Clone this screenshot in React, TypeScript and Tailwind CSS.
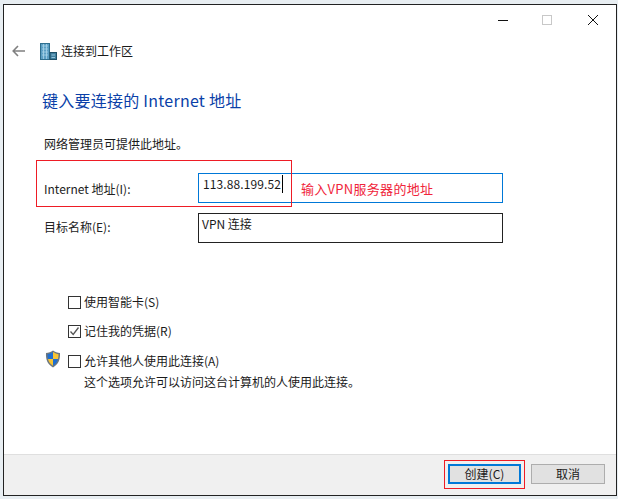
const font = { fontFamily: '"Noto Sans CJK SC", "Noto Sans", sans-serif' };

function Checkbox({ checked }: { checked?: boolean }) {
  return (
    <span className="flex h-[13px] w-[13px] shrink-0 items-center justify-center border border-[#333333] bg-white">
      {checked && (
        <svg width="11" height="11" viewBox="0 0 11 11" fill="none">
          <path d="M1.5 5.5 L4.2 8.5 L9.5 1.5" stroke="#555555" strokeWidth="1.3" />
        </svg>
      )}
    </span>
  );
}

function BuildingIcon() {
  return (
    <svg width="17" height="17" viewBox="0 0 17 17">
      <rect x="0.5" y="0.5" width="9" height="16" fill="#5c9fc4" stroke="#2f6f8f" />
      <path d="M2 3h6M2 6h6M2 9h6M2 12h6M3.5 1v15M6.5 1v15" stroke="#a8d4ea" strokeWidth="0.8" />
      <rect x="10" y="9.5" width="6.5" height="7" fill="#3f7f9f" stroke="#1f5068" />
      <path d="M11.5 12h3.5M11.5 14.5h3.5" stroke="#a8d4ea" strokeWidth="0.8" />
    </svg>
  );
}

function ShieldIcon() {
  return (
    <svg width="16" height="18" viewBox="0 0 16 18">
      <path d="M8 0.5 C10 2 12.5 2.8 15 3 C15.3 9 14 14 8 17.5 C2 14 0.7 9 1 3 C3.5 2.8 6 2 8 0.5Z" fill="#6b7780" />
      <path d="M8 2 C6 3.2 4.2 3.9 2.5 4.2 C2.5 6 2.6 7.5 3 9 L8 9Z" fill="#1f6fd0" />
      <path d="M8 2 C10 3.2 11.8 3.9 13.5 4.2 C13.5 6 13.4 7.5 13 9 L8 9Z" fill="#f7c433" />
      <path d="M3 9 L8 9 L8 15.8 C5 14 3.6 11.6 3 9Z" fill="#f7c433" />
      <path d="M13 9 L8 9 L8 15.8 C11 14 12.4 11.6 13 9Z" fill="#1f6fd0" />
    </svg>
  );
}

export default function App() {
  return (
    <div className="h-[499px] w-[618px] overflow-hidden bg-[#e8eef2] pl-[3px] pt-[4px]" style={font}>
      <div className="relative flex h-[492px] w-[614px] flex-col border border-[#222222] bg-white text-[12px] text-[#1a1a1a]">
        <div className="flex h-[31px] items-start justify-end pt-[9px]">
          <svg width="105" height="14" viewBox="0 0 105 14" fill="none" className="mr-[16px]">
            <path d="M3 6.5h10" stroke="#111111" />
            <rect x="47.5" y="1.5" width="9" height="9" stroke="#c8c8c8" />
            <path d="M93 1l10 10M103 1L93 11" stroke="#111111" />
          </svg>
        </div>

        <div className="flex h-[30px] items-center pl-[8px]">
          <svg width="14" height="12" viewBox="0 0 14 12" fill="none">
            <path d="M6 1L1.2 6L6 11M1.5 6H13" stroke="#808080" strokeWidth="1.6" />
          </svg>
          <span className="ml-[14px]"><BuildingIcon /></span>
          <span className="ml-[4px] text-[12px] leading-none">连接到工作区</span>
        </div>

        <div className="mt-[23px] pl-[38px] text-[16px] leading-[22px] tracking-[0.25px] text-[#0a3fa8]">键入要连接的 Internet 地址</div>

        <div className="mt-[24px] pl-[40px] leading-[18px]">网络管理员可提供此地址。</div>

        <div className="mt-[20px] flex pl-[40px]">
          <span className="w-[154px] pt-[7px] leading-[18px] text-[#222222]">Internet 地址(I):</span>
          <div className="flex h-[30px] w-[305px] items-start border border-[#0078d7] pl-[4px] pt-[1px] text-[12px] leading-[18px]">
            <span className="border-r border-black pr-px tracking-[0.1px]">113.88.199.52</span>
            <span className="ml-[18px] pt-[5px] text-[13px] leading-[18px] tracking-[0.3px] text-[#f0243a]">输入VPN服务器的地址</span>
          </div>
        </div>

        <div className="mt-[10px] flex pl-[40px]">
          <span className="w-[154px] pt-[5px] leading-[18px] text-[#222222]">目标名称(E):</span>
          <div className="h-[30px] w-[305px] border border-[#222222] pl-[3px] pt-[1px] leading-[18px]">VPN 连接</div>
        </div>

        <div className="mt-[50px] flex flex-col gap-[11px] pl-[64px]">
          <label className="flex h-[18px] items-center gap-[3px]"><Checkbox />使用智能卡(S)</label>
          <label className="flex h-[18px] items-center gap-[3px]"><Checkbox checked />记住我的凭据(R)</label>
        </div>

        <div className="mt-[12px] flex pl-[41px]">
          <span className="mt-[-2px] w-[23px]"><ShieldIcon /></span>
          <div>
            <label className="flex h-[18px] items-center gap-[3px]"><Checkbox />允许其他人使用此连接(A)</label>
            <div className="mt-[3px] pl-[16px] leading-[18px]">这个选项允许可以访问这台计算机的人使用此连接。</div>
          </div>
        </div>

        <div className="mt-auto flex h-[41px] items-center justify-end gap-[10px] border-t border-[#dfdfdf] bg-[#f0f0f0] pb-[2px] pr-[11px]">
          <button className="h-[20px] w-[73px] border-2 border-[#0078d7] bg-[#e1e1e1] text-[12px] leading-none">创建(C)</button>
          <button className="h-[20px] w-[74px] border border-[#adadad] bg-[#e1e1e1] text-[12px] leading-none">取消</button>
        </div>

        <div className="absolute left-[32px] top-[155px] h-[47px] w-[256px] border border-[#ee1c25]" />
        <div className="absolute left-[440px] top-[455px] h-[29px] w-[81px] border border-[#ee1c25]" />
      </div>
    </div>
  );
}
